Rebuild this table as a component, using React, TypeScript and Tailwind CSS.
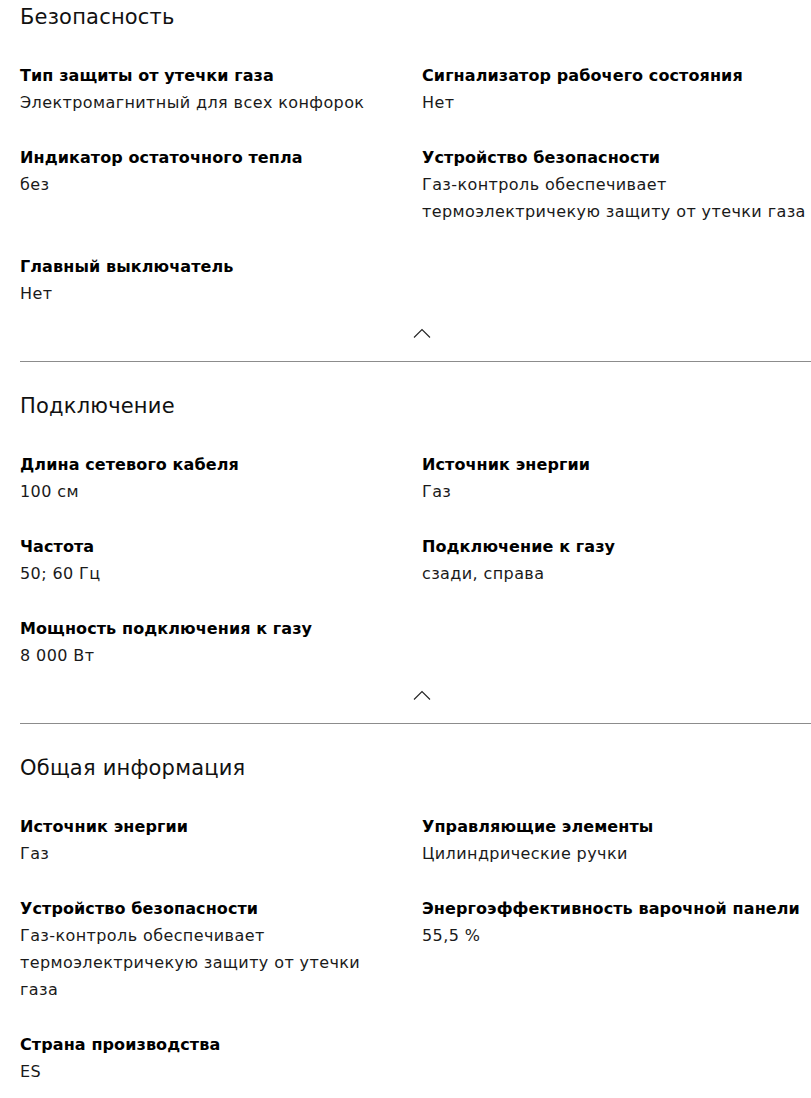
type Spec = { label: string; value: string[] };

type Section = { title: string; specs: Spec[] };

const sections: Section[] = [
  {
    title: "Безопасность",
    specs: [
      { label: "Тип защиты от утечки газа", value: ["Электромагнитный для всех конфорок"] },
      { label: "Сигнализатор рабочего состояния", value: ["Нет"] },
      { label: "Индикатор остаточного тепла", value: ["без"] },
      {
        label: "Устройство безопасности",
        value: ["Газ-контроль обеспечивает", "термоэлектричекую защиту от утечки газа"],
      },
      { label: "Главный выключатель", value: ["Нет"] },
    ],
  },
  {
    title: "Подключение",
    specs: [
      { label: "Длина сетевого кабеля", value: ["100 см"] },
      { label: "Источник энергии", value: ["Газ"] },
      { label: "Частота", value: ["50; 60 Гц"] },
      { label: "Подключение к газу", value: ["сзади, справа"] },
      { label: "Мощность подключения к газу", value: ["8 000 Вт"] },
    ],
  },
  {
    title: "Общая информация",
    specs: [
      { label: "Источник энергии", value: ["Газ"] },
      { label: "Управляющие элементы", value: ["Цилиндрические ручки"] },
      {
        label: "Устройство безопасности",
        value: ["Газ-контроль обеспечивает", "термоэлектричекую защиту от утечки", "газа"],
      },
      { label: "Энергоэффективность варочной панели", value: ["55,5 %"] },
      { label: "Страна производства", value: ["ES"] },
    ],
  },
];

function ChevronUp() {
  return (
    <svg width="18" height="10" viewBox="0 0 18 10" fill="none" className="block">
      <path d="M1 9.5 L9 1.5 L17 9.5" stroke="#222" strokeWidth="1.1" />
    </svg>
  );
}

function SpecBlock({ section, last }: { section: Section; last: boolean }) {
  return (
    <section className="pl-5">
      <h2 className="h-[35px] text-[21px] leading-[35px] tracking-[0.2px] text-[#111]">{section.title}</h2>
      <div className="mt-[27px] grid grid-cols-[402px_389px] gap-y-7">
        {section.specs.map((spec, i) => (
          <div key={i} className={i % 2 === 0 ? "pr-5" : ""}>
            <div className="text-base font-bold leading-[27px] tracking-[0.1px] text-black">{spec.label}</div>
            <div className="text-base leading-[27px] tracking-[0.4px] text-[#1a1a1a]">
              {spec.value.map((line, j) => (
                <div key={j} className="whitespace-nowrap">{line}</div>
              ))}
            </div>
          </div>
        ))}
      </div>
      {!last && (
        <>
          <div className="flex h-[54px] items-start justify-center pt-[21px] pl-[13px]">
            <ChevronUp />
          </div>
          <div className="h-px w-full bg-[#8c8c8c]" />
          <div className="h-[27px]" />
        </>
      )}
    </section>
  );
}

export default function App() {
  return (
    <div className="min-h-[1098px] w-[811px] overflow-hidden bg-white font-['DejaVu_Sans',sans-serif]">
      {sections.map((s, i) => (
        <SpecBlock key={s.title} section={s} last={i === sections.length - 1} />
      ))}
    </div>
  );
}
